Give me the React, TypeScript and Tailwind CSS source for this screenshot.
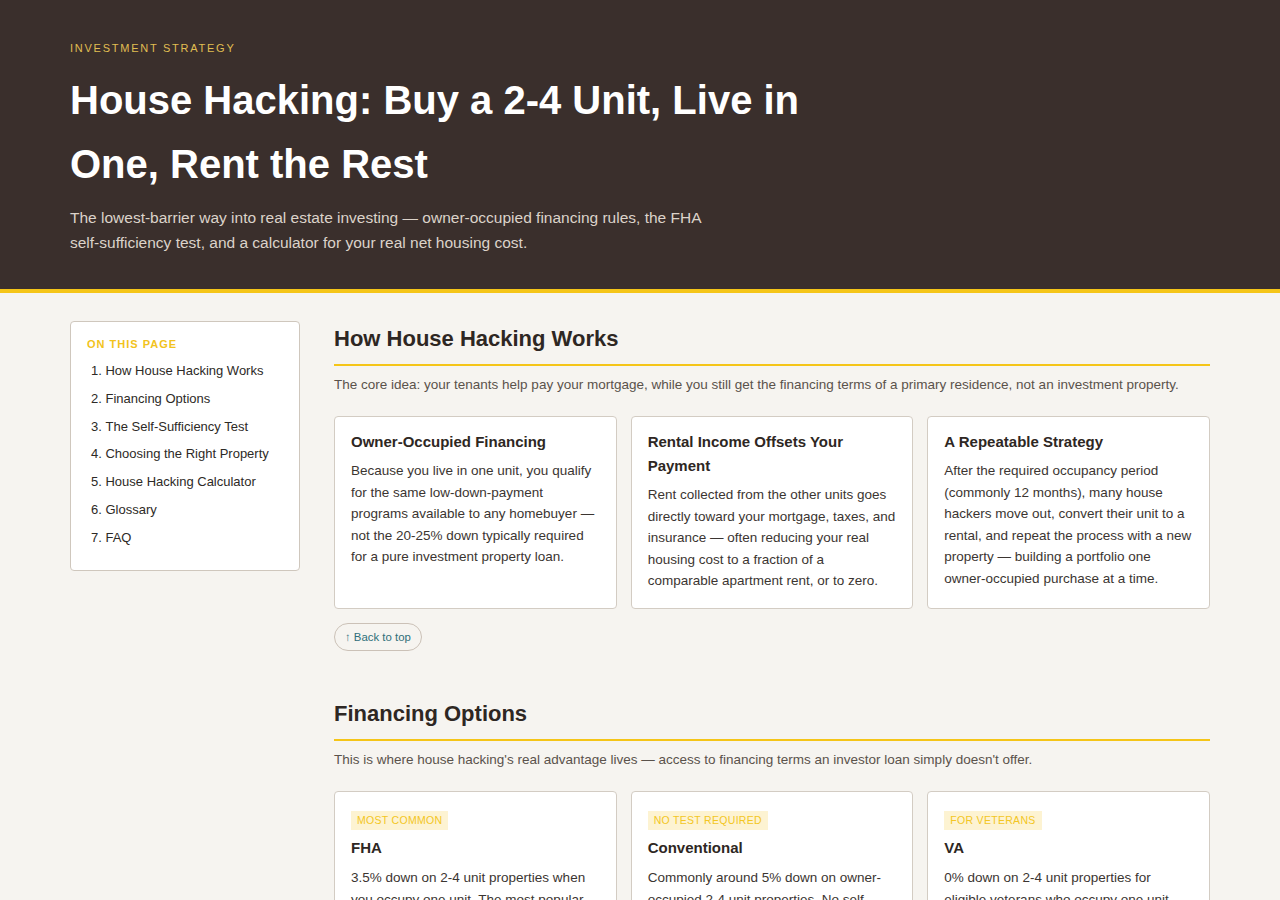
import React from 'react';

interface InfoCard {
  badge?: string;
  title: string;
  body: string;
}

const tocItems = [
  'How House Hacking Works',
  'Financing Options',
  'The Self-Sufficiency Test',
  'Choosing the Right Property',
  'House Hacking Calculator',
  'Glossary',
  'FAQ',
];

const howItWorks: InfoCard[] = [
  {
    title: 'Owner-Occupied Financing',
    body: 'Because you live in one unit, you qualify for the same low-down-payment programs available to any homebuyer — not the 20-25% down typically required for a pure investment property loan.',
  },
  {
    title: 'Rental Income Offsets Your Payment',
    body: 'Rent collected from the other units goes directly toward your mortgage, taxes, and insurance — often reducing your real housing cost to a fraction of a comparable apartment rent, or to zero.',
  },
  {
    title: 'A Repeatable Strategy',
    body: 'After the required occupancy period (commonly 12 months), many house hackers move out, convert their unit to a rental, and repeat the process with a new property — building a portfolio one owner-occupied purchase at a time.',
  },
];

const financing: InfoCard[] = [
  {
    badge: 'Most Common',
    title: 'FHA',
    body: '3.5% down on 2-4 unit properties when you occupy one unit. The most popular route for first-time house hackers, though 3-4 unit buildings must pass the self-sufficiency test.',
  },
  {
    badge: 'No Test Required',
    title: 'Conventional',
    body: 'Commonly around 5% down on owner-occupied 2-4 unit properties. No self-sufficiency test, and mortgage insurance can be removed once you reach 20% equity.',
  },
  {
    badge: 'For Veterans',
    title: 'VA',
    body: '0% down on 2-4 unit properties for eligible veterans who occupy one unit. No monthly mortgage insurance, and rental income from the other units can help you qualify.',
  },
];

const CardGrid: React.FC<{ cards: InfoCard[] }> = ({ cards }) => (
  <div className="mt-[21px] grid grid-cols-3 gap-[14px]">
    {cards.map((card) => (
      <div
        key={card.title}
        className={`rounded border border-[#d3ccc3] bg-white px-4 pb-4 ${card.badge ? 'pt-[19px]' : 'pt-[13px]'}`}
      >
        {card.badge && (
          <span className="mb-[6px] block w-fit bg-[#fdf3d2] px-[6px] text-[10.5px] leading-[19px] uppercase tracking-[0.3px] text-[#f3c623]">
            {card.badge}
          </span>
        )}
        <h3 className="text-[15px] leading-[24px] font-bold text-[#2e2723]">{card.title}</h3>
        <p className={`text-[13.5px] leading-[21.6px] text-[#3b3531] ${card.badge ? 'mt-[7px]' : 'mt-[6px]'}`}>
          {card.body}
        </p>
      </div>
    ))}
  </div>
);

const Section: React.FC<{ title: string; intro: string; cards: InfoCard[]; first?: boolean }> = ({
  title,
  intro,
  cards,
  first,
}) => (
  <section className={first ? '' : 'mt-[45px]'}>
    <h2 className="border-b-2 border-[#f5c518] pt-[1px] pb-[8px] text-[22px] leading-[34px] font-bold text-[#2e2723]">
      {title}
    </h2>
    <p className="mt-[9px] text-[13.5px] leading-[20px] text-[#5a524b]">{intro}</p>
    <CardGrid cards={cards} />
    <button className="mt-[14px] rounded-full border border-[#cbc1b7] px-[10px] text-[11.4px] leading-[26px] text-[#2f6f7a]">
      ↑ Back to top
    </button>
  </section>
);

export default function App() {
  return (
    <div className="min-h-screen bg-[#f6f4f0] font-['Liberation_Sans',Arial,sans-serif]">
      <header className="border-b-4 border-[#f5c518] bg-[#3a2f2c]">
        <div className="mx-auto max-w-[1140px] pt-10 pb-[34px]">
          <div className="text-[11px] leading-4 tracking-[1.75px] text-[#e0be52] uppercase">Investment Strategy</div>
          <h1 className="mt-3 max-w-[800px] text-[40px] leading-[64px] font-bold text-white">
            House Hacking: Buy a 2-4 Unit, Live in One, Rent the Rest
          </h1>
          <p className="mt-[9px] max-w-[660px] text-[15.5px] leading-[25px] text-[#dcd3ca]">
            The lowest-barrier way into real estate investing — owner-occupied financing rules, the FHA
            self-sufficiency test, and a calculator for your real net housing cost.
          </p>
        </div>
      </header>

      <main className="mx-auto grid max-w-[1140px] grid-cols-[230px_1fr] items-start gap-[34px] pt-[28px] pb-16">
        <nav className="rounded border border-[#cfc7bd] bg-white px-4 pt-4 pb-[18px]">
          <div className="text-[11px] leading-3 font-bold tracking-[1px] text-[#f2c31c] uppercase">On this page</div>
          <ol className="mt-[7px] list-inside list-decimal pl-1 text-[13px] text-[#2d2a26]">
            {tocItems.map((item) => (
              <li key={item} className="py-1 leading-[19.8px]">
                {item}
              </li>
            ))}
          </ol>
        </nav>

        <div>
          <Section
            first
            title="How House Hacking Works"
            intro="The core idea: your tenants help pay your mortgage, while you still get the financing terms of a primary residence, not an investment property."
            cards={howItWorks}
          />
          <Section
            title="Financing Options"
            intro="This is where house hacking's real advantage lives — access to financing terms an investor loan simply doesn't offer."
            cards={financing}
          />
        </div>
      </main>
    </div>
  );
}
